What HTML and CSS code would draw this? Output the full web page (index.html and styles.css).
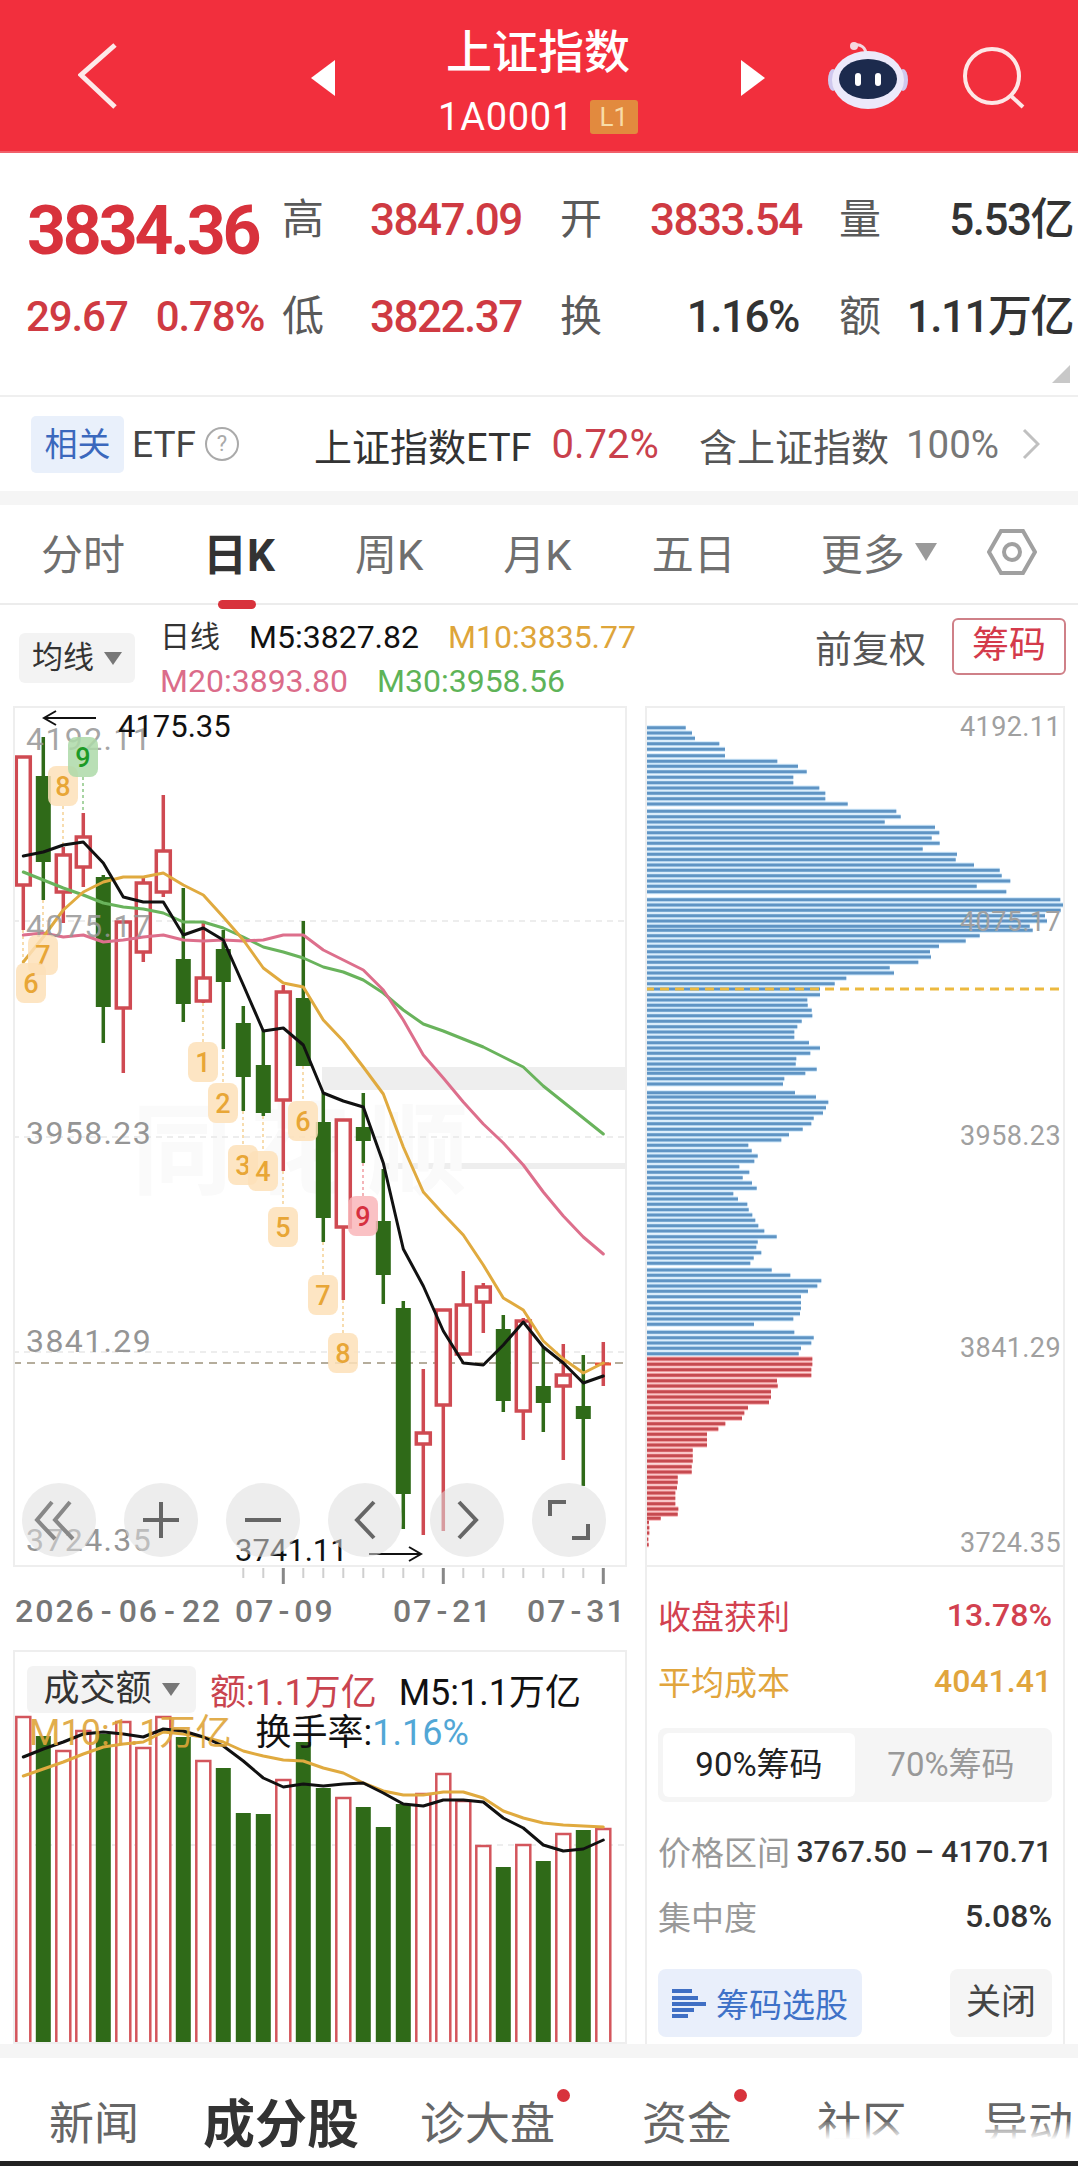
FILE: index.html
```html
<!DOCTYPE html>
<html lang="en">

<head>
    <meta charset="UTF-8">
    <meta name="viewport" content="width=device-width, initial-scale=1.0">
    <title>上证指数</title>
    <link rel="stylesheet" href="styles.css">
</head>

<body>
    <div class="page">
        <header class="topbar">
            <svg class="back" viewBox="0 0 40 68"><path d="M37 3L3 33L37 65"/></svg>
            <span class="switch switch-left"></span>
            <div class="title">
                <h1>上证指数</h1>
                <p>1A0001<span class="badge">L1</span></p>
            </div>
            <span class="switch switch-right"></span>
            <svg class="robot" viewBox="0 0 80 70">
                <path d="M38 14C38 6 32 3 27 4" fill="none" stroke="#f3d7df" stroke-width="3"/>
                <circle cx="26" cy="5" r="4" fill="#f6d9df"/>
                <ellipse cx="5" cy="39" rx="5" ry="11" fill="#cfc8ee"/>
                <ellipse cx="75" cy="39" rx="5" ry="11" fill="#cfc8ee"/>
                <ellipse cx="40" cy="39" rx="36" ry="29" fill="#ece9fa"/>
                <ellipse cx="40" cy="38" rx="29" ry="20" fill="#1c2a4d"/>
                <rect x="27" y="32" width="6" height="13" rx="3" fill="#fff"/>
                <rect x="47" y="32" width="6" height="13" rx="3" fill="#fff"/>
            </svg>
            <svg class="search" viewBox="0 0 62 62"><circle cx="29" cy="29" r="27"/><path d="M47 48L60 60"/></svg>
        </header>

        <section class="quote">
            <div class="price">3834.36</div>
            <div class="label">高</div>
            <div class="num up">3847.09</div>
            <div class="label">开</div>
            <div class="num up">3833.54</div>
            <div class="label">量</div>
            <div class="num end">5.53亿</div>

            <div class="change up"><span>29.67</span><span>0.78%</span></div>
            <div class="label">低</div>
            <div class="num up">3822.37</div>
            <div class="label">换</div>
            <div class="num num-right">1.16%</div>
            <div class="label">额</div>
            <div class="num end">1.11万亿</div>
            <span class="corner"></span>
        </section>

        <section class="etf">
            <span class="chip">相关</span>
            <span class="etf-name">ETF</span>
            <span class="help">?</span>
            <span class="etf-title">上证指数ETF</span>
            <span class="etf-pct">0.72%</span>
            <span class="etf-title etf-has">含上证指数</span>
            <span class="etf-gray">100%</span>
            <svg class="etf-arrow" viewBox="0 0 18 32"><path d="M2 2L16 16L2 30"/></svg>
        </section>

        <nav class="tabs">
            <a>分时</a>
            <a class="active">日K</a>
            <a>周K</a>
            <a>月K</a>
            <a>五日</a>
            <a class="more">更多<i class="tri"></i></a>
            <svg class="hex" viewBox="0 0 50 46"><path d="M14 2H36L48 23L36 44H14L2 23Z"/><circle cx="25" cy="23" r="8"/></svg>
        </nav>

        <div class="legend">
            <div class="select">均线<i class="tri tri-dark"></i></div>
            <div class="legend-lines">
                <div class="legend-line"><span class="ma-name">日线</span><span class="black">M5:3827.82</span><span class="orange">M10:3835.77</span></div>
                <div class="legend-line"><span class="pink">M20:3893.80</span><span class="green">M30:3958.56</span></div>
            </div>
            <div class="legend-right">
                <span class="adjust">前复权</span>
                <span class="chips-btn">筹码</span>
            </div>
        </div>

        <div class="charts">
            <div class="left">
                <div class="chart-box">
                    <svg class="kline" viewBox="13 706 614 861">
                        <!-- watermark -->
                        <rect x="322" y="1067" width="305" height="23" fill="#eeeeee"/>
                        <rect x="384" y="1163" width="243" height="6" fill="#eeeeee"/>
                        <text class="wm" x="132" y="1186">同花顺</text>

                        <!-- grid -->
                        <path class="grid" d="M13 921H627M13 1137H627M13 1352H627"/>
                        <path class="last" d="M13 1363H627"/>
                        <text class="axis" x="26" y="1144">3958.23</text>
                        <text class="axis" x="26" y="1352">3841.29</text>
                        <text class="axis" x="26" y="1551">3724.35</text>

                        <!-- nine count stems -->
                        <path class="stem" d="M203 1003V1042M223 1049V1083M243 1111V1145M263 1116V1150M283 1171V1207M303 1066V1101M323 1242V1275M343 1300V1333M63 806V847M43 900V935M23 930V963"/>
                        <path class="stem stem-red" d="M363 1163V1196"/>
                        <path class="stem stem-green" d="M83 777V813"/>

                        <!-- candles -->
                        <path class="wick-up" d="M23.3 757V930M63.3 847V923M83.3 813V887M123.3 922V1073M143.3 878V962M163.3 795V897M203.3 923V1003M283.3 985V1171M343.3 1120V1300M423.3 1369V1535M443.3 1310V1531M463.3 1271V1354M483.3 1283V1333M523.3 1318V1440M563.3 1344V1460M603.3 1342V1386"/>
                        <path class="wick-down" d="M43.3 737V900M103.3 875V1043M183.3 888V1022M223.3 930V1049M243.3 1006V1111M263.3 1030V1116M303.3 921V1066M323.3 1092V1242M363.3 1093V1163M383.3 1169V1304M403.3 1301V1529M503.3 1315V1412M543.3 1347V1432M583.3 1355V1486"/>
                        <g class="body-up">
                            <rect x="16.3" y="757" width="14" height="128"/>
                            <rect x="56.3" y="855" width="14" height="37"/>
                            <rect x="76.3" y="837" width="14" height="30"/>
                            <rect x="116.3" y="922" width="14" height="86"/>
                            <rect x="136.3" y="883" width="14" height="69"/>
                            <rect x="156.3" y="851" width="14" height="41"/>
                            <rect x="196.3" y="978" width="14" height="23"/>
                            <rect x="276.3" y="992" width="14" height="108"/>
                            <rect x="336.3" y="1120" width="14" height="107"/>
                            <rect x="416.3" y="1433" width="14" height="11"/>
                            <rect x="436.3" y="1310" width="14" height="95"/>
                            <rect x="456.3" y="1305" width="14" height="49"/>
                            <rect x="476.3" y="1287" width="14" height="15"/>
                            <rect x="516.3" y="1321" width="14" height="90"/>
                            <rect x="556.3" y="1375" width="14" height="11"/>
                        </g>
                        <g class="body-down">
                            <rect x="35.8" y="776" width="15" height="86"/>
                            <rect x="95.8" y="877" width="15" height="130"/>
                            <rect x="175.8" y="959" width="15" height="45"/>
                            <rect x="215.8" y="949" width="15" height="33"/>
                            <rect x="235.8" y="1023" width="15" height="54"/>
                            <rect x="255.8" y="1065" width="15" height="48"/>
                            <rect x="295.8" y="998" width="15" height="68"/>
                            <rect x="315.8" y="1122" width="15" height="96"/>
                            <rect x="355.8" y="1127" width="15" height="14"/>
                            <rect x="375.8" y="1221" width="15" height="54"/>
                            <rect x="395.8" y="1308" width="15" height="186"/>
                            <rect x="495.8" y="1329" width="15" height="72"/>
                            <rect x="535.8" y="1386" width="15" height="17"/>
                            <rect x="575.8" y="1406" width="15" height="13"/>
                        </g>
                        <path class="cross" d="M595 1364H611"/>

                        <!-- moving averages -->
                        <polyline class="ma ma30" points="23.3,872 43.3,880 63.3,888 83.3,895 103.3,903 123.3,907 143.3,909 163.3,913 183.3,922 203.3,922 223.3,928 243.3,937 263.3,947 283.3,952 303.3,958 323.3,967 343.3,972 363.3,980 383.3,993 403.3,1010 423.3,1024 443.3,1031 463.3,1039 483.3,1047 503.3,1057 523.3,1067 543.3,1086 563.3,1102 583.3,1118 603.3,1134"/>
                        <polyline class="ma ma20" points="23.3,935 43.3,933 63.3,937 83.3,935 103.3,942 123.3,940 143.3,937 163.3,935 183.3,940 203.3,941 223.3,940 243.3,941 263.3,940 283.3,935 303.3,935 323.3,950 343.3,960 363.3,970 383.3,990 403.3,1020 423.3,1055 443.3,1078 463.3,1102 483.3,1124 503.3,1143 523.3,1165 543.3,1192 563.3,1216 583.3,1237 603.3,1254"/>
                        <polyline class="ma ma10" points="23.3,962 43.3,937 63.3,910 83.3,892 103.3,882 123.3,877 143.3,877 163.3,873 183.3,885 203.3,895 223.3,917 243.3,940 263.3,968 283.3,983 303.3,987 323.3,1020 343.3,1041 363.3,1067 383.3,1094 403.3,1147 423.3,1192 443.3,1214 463.3,1235 483.3,1265 503.3,1298 523.3,1310 543.3,1341 563.3,1359 583.3,1373 603.3,1363"/>
                        <polyline class="ma ma5" points="23.3,856 43.3,852 63.3,845 83.3,842 103.3,863 123.3,897 143.3,902 163.3,902 183.3,935 203.3,928 223.3,940 243.3,985 263.3,1031 283.3,1028 303.3,1045 323.3,1093 343.3,1101 363.3,1107 383.3,1163 403.3,1249 423.3,1286 443.3,1331 463.3,1363 483.3,1365 503.3,1345 523.3,1322 543.3,1347 563.3,1363 583.3,1383 603.3,1376"/>

                        <!-- these two axis labels sit over the candles -->
                        <text class="axis axis-top" x="26" y="750">4192.11</text>
                        <text class="axis axis-top" x="26" y="937">4075.17</text>

                        <!-- nine count tags -->
                        <g class="tag">
                            <rect x="188" y="1042" width="30" height="40" rx="8"/><text x="203" y="1072">1</text>
                            <rect x="208" y="1083" width="30" height="40" rx="8"/><text x="223" y="1113">2</text>
                            <rect x="228" y="1145" width="30" height="40" rx="8"/><text x="243" y="1175">3</text>
                            <rect x="248" y="1151" width="30" height="40" rx="8"/><text x="263" y="1181">4</text>
                            <rect x="268" y="1207" width="30" height="40" rx="8"/><text x="283" y="1237">5</text>
                            <rect x="288" y="1101" width="30" height="40" rx="8"/><text x="303" y="1131">6</text>
                            <rect x="308" y="1275" width="30" height="40" rx="8"/><text x="323" y="1305">7</text>
                            <rect x="328" y="1333" width="30" height="40" rx="8"/><text x="343" y="1363">8</text>
                            <rect x="48" y="766" width="30" height="40" rx="8"/><text x="63" y="796">8</text>
                            <rect x="28" y="935" width="30" height="40" rx="8"/><text x="43" y="965">7</text>
                            <rect x="16" y="963" width="30" height="40" rx="8"/><text x="31" y="993">6</text>
                        </g>
                        <g class="tag tag-red">
                            <rect x="348" y="1196" width="30" height="40" rx="8"/><text x="363" y="1226">9</text>
                        </g>
                        <g class="tag tag-green">
                            <rect x="68" y="737" width="30" height="40" rx="8"/><text x="83" y="767">9</text>
                        </g>

                        <!-- high / low arrows -->
                        <path class="arrow" d="M96 718H44M56 711L44 718L56 725"/>
                        <text class="note" x="118" y="737">4175.35</text>
                        <text class="note" x="235" y="1561">3741.11</text>
                        <path class="arrow" d="M369 1554H421M409 1547L421 1554L409 1561"/>
                    </svg>
                    <div class="tools">
                        <button><svg viewBox="0 0 74 74"><path class="soft" d="M30 19L15 37L33 56M48 19L33 37L51 56"/></svg></button>
                        <button><svg viewBox="0 0 74 74"><path d="M19 37H55M37 19V55"/></svg></button>
                        <button><svg viewBox="0 0 74 74"><path d="M19 37H55"/></svg></button>
                        <button><svg viewBox="0 0 74 74"><path d="M46 19L29 37L46 55"/></svg></button>
                        <button><svg viewBox="0 0 74 74"><path d="M29 19L46 37L29 55"/></svg></button>
                        <button><svg viewBox="0 0 74 74"><path d="M18 33V19H34M56 41V55H40"/></svg></button>
                    </div>
                </div>

                <svg class="xaxis" viewBox="13 1567 614 83">
                    <path class="tick" d="M243.3 1568V1578M263.3 1568V1578M303.3 1568V1578M323.3 1568V1578M343.3 1568V1578M363.3 1568V1578M383.3 1568V1578M403.3 1568V1578M423.3 1568V1578M463.3 1568V1578M483.3 1568V1578M503.3 1568V1578M523.3 1568V1578M543.3 1568V1578M563.3 1568V1578M583.3 1568V1578"/>
                    <path class="tick-big" d="M283.3 1568V1584M443.3 1568V1584M603.3 1568V1584"/>
                    <text class="date" x="15" y="1622">2026<tspan dx="5">-</tspan><tspan dx="5">06</tspan><tspan dx="5">-</tspan><tspan dx="5">22</tspan></text>
                    <text class="date" x="235" y="1622">07<tspan dx="3">-</tspan><tspan dx="3">09</tspan></text>
                    <text class="date" x="393" y="1622">07<tspan dx="3">-</tspan><tspan dx="3">21</tspan></text>
                    <text class="date" x="527" y="1622">07<tspan dx="3">-</tspan><tspan dx="3">31</tspan></text>
                </svg>

                <div class="vol-box">
                    <svg class="vol" viewBox="13 1650 614 394">
                        <path class="grid" d="M13 1845H627"/>
                        <g class="vol-up">
                            <rect x="16.3" y="1717" width="14" height="327"/>
                            <rect x="56.3" y="1751" width="14" height="293"/>
                            <rect x="76.3" y="1731" width="14" height="313"/>
                            <rect x="116.3" y="1722" width="14" height="322"/>
                            <rect x="136.3" y="1748" width="14" height="296"/>
                            <rect x="156.3" y="1717" width="14" height="327"/>
                            <rect x="196.3" y="1761" width="14" height="283"/>
                            <rect x="276.3" y="1780" width="14" height="264"/>
                            <rect x="336.3" y="1798" width="14" height="246"/>
                            <rect x="416.3" y="1794" width="14" height="250"/>
                            <rect x="436.3" y="1774" width="14" height="270"/>
                            <rect x="456.3" y="1801" width="14" height="243"/>
                            <rect x="476.3" y="1846" width="14" height="198"/>
                            <rect x="516.3" y="1845" width="14" height="199"/>
                            <rect x="556.3" y="1834" width="14" height="210"/>
                            <rect x="596.3" y="1829" width="14" height="215"/>
                        </g>
                        <g class="vol-down">
                            <rect x="35.8" y="1736" width="15" height="308"/>
                            <rect x="95.8" y="1734" width="15" height="310"/>
                            <rect x="175.8" y="1737" width="15" height="307"/>
                            <rect x="215.8" y="1768" width="15" height="276"/>
                            <rect x="235.8" y="1813" width="15" height="231"/>
                            <rect x="255.8" y="1814" width="15" height="230"/>
                            <rect x="295.8" y="1742" width="15" height="302"/>
                            <rect x="315.8" y="1788" width="15" height="256"/>
                            <rect x="355.8" y="1807" width="15" height="237"/>
                            <rect x="375.8" y="1827" width="15" height="217"/>
                            <rect x="395.8" y="1804" width="15" height="240"/>
                            <rect x="495.8" y="1867" width="15" height="177"/>
                            <rect x="535.8" y="1861" width="15" height="183"/>
                            <rect x="575.8" y="1830" width="15" height="214"/>
                        </g>
                        <polyline class="ma vma10" points="23.3,1776 43.3,1769 63.3,1762 83.3,1754 103.3,1747 123.3,1744 143.3,1742 163.3,1732 183.3,1734 203.3,1737 223.3,1742 243.3,1751 263.3,1756 283.3,1760 303.3,1761 323.3,1768 343.3,1773 363.3,1783 383.3,1791 403.3,1795 423.3,1795 443.3,1792 463.3,1792 483.3,1798 503.3,1811 523.3,1818 543.3,1823 563.3,1825 583.3,1826 603.3,1827"/>
                        <polyline class="ma ma5" points="23.3,1757 43.3,1749 63.3,1742 83.3,1734 103.3,1732 123.3,1734 143.3,1737 163.3,1729 183.3,1731 203.3,1737 223.3,1746 243.3,1761 263.3,1778 283.3,1787 303.3,1784 323.3,1786 343.3,1784 363.3,1783 383.3,1793 403.3,1804 423.3,1806 443.3,1800 463.3,1800 483.3,1802 503.3,1818 523.3,1828 543.3,1845 563.3,1851 583.3,1849 603.3,1840"/>
                    </svg>
                    <div class="vol-legend">
                        <div class="vol-line">
                            <div class="select select-vol">成交额<i class="tri tri-dark"></i></div>
                            <span class="red">额:1.1万亿</span>
                            <span class="black">M5:1.1万亿</span>
                        </div>
                        <div class="vol-line vol-line2">
                            <span class="orange">M10:1.1万亿</span>
                            <span class="black">换手率:<em>1.16%</em></span>
                        </div>
                    </div>
                </div>
            </div>

            <div class="right">
                <div class="chip-box">
                    <svg class="bars" viewBox="645 706 420 861">
                        <defs>
                            <path id="blue" d="M645 727.7H685.7M645 733H692M645 738.3H695M645 743.7H719.3M645 749.3H725M645 755.7H725M645 761.3H777.3M645 766.3H798M645 771.7H806.7M645 777.3H793.3M645 782.7H793.3M645 788H819.3M645 793.3H825.3M645 798.7H825.3M645 804H847.7M645 811.3H896.3M645 816.7H900.7M645 822H884.7M645 827.3H935M645 832.7H939.3M645 838H931.7M645 843.3H939.7M645 849H922.7M645 854.3H957M645 859.7H955.7M645 865H974M645 870.3H999.7M645 875.7H1001.7M645 881H1010.3M645 886.3H976.7M645 891.7H1006.3M645 899.7H1060.3M645 905H1064M645 910.3H1060.7M645 915.7H1045M645 921H1047M645 926.3H1029.7M645 930.3H1032.7M645 935.7H979.7M645 941H965.7M645 946.3H939M645 951.7H930M645 957H931M645 962.3H918.3M645 967.7H889.7M645 973H894M645 978.3H846.3M645 983.7H834.7M645 989H820M645 994.7H820M645 1000H807.3M645 1005.3H807.7M645 1010.3H811.7M645 1015.7H812.3M645 1021.3H801.7M645 1026.7H797.3M645 1032H794.3M645 1037.3H794.3M645 1042.7H809M645 1048H820M645 1053.3H810.3M645 1058.7H796.3M645 1064H795.7M645 1069.3H816.7M645 1073.3H805.3M645 1078.7H784.3M645 1084H783M645 1092.7H795M645 1097H816M645 1102.3H828.3M645 1107.7H826M645 1113H823M645 1118.3H813.7M645 1123.7H811.3M645 1129.3H802.7M645 1134.7H789M645 1140H781.3M645 1145.3H748.3M645 1150.7H751.7M645 1156H757.7M645 1161.3H754.3M645 1166.7H739.3M645 1172.3H749.3M645 1177.7H742.7M645 1183H752M645 1188.3H756.7M645 1193.7H733.3M645 1199H738M645 1204.3H747.3M645 1209.7H748.7M645 1215H752.3M645 1220.3H755.3M645 1225.7H758.3M645 1231H764.3M645 1236.7H776.7M645 1242H757.7M645 1247.3H756.3M645 1252.7H761.3M645 1258H753.7M645 1263.3H750.3M645 1270H771.7M645 1275.3H790.3M645 1280.7H821.3M645 1286H817.3M645 1291.3H808M645 1296.7H801M645 1302.7H801M645 1308.3H801M645 1313.7H800M645 1319H793.3M645 1324.3H754M645 1332.3H794.3M645 1337.7H813.7M645 1343H811.3M645 1348.3H801M645 1353.7H798.7"/>
                            <path id="red" d="M645 1359H812.3M645 1364.3H812.3M645 1369.7H811.3M645 1375.3H811.3M645 1380.7H777M645 1386H777.7M645 1391.7H771M645 1397H771M645 1402.3H769M645 1407.7H748M645 1413H744.3M645 1418.3H742M645 1423.7H725.3M645 1429H718.3M645 1434.3H707M645 1439.7H707M645 1445H707M645 1450.3H692.7M645 1455.7H692.7M645 1461H692.7M645 1466.7H691.7M645 1472H691.7M645 1477.3H677.7M645 1482.3H677.7M645 1487.7H677M645 1493H675.3M645 1498.3H675.3M645 1503.7H675.3M645 1509H678.3M645 1514.3H677.7M645 1518.3H660.7M645 1522.3H649M645 1527.7H649.3M645 1533H649.3M645 1539.3H648.3M645 1544.7H648.7"/>
                        </defs>
                        <use href="#blue" class="halo-blue"/>
                        <use href="#blue" class="bar-blue"/>
                        <use href="#red" class="halo-red"/>
                        <use href="#red" class="bar-red"/>
                        <path class="avg" d="M645 989H1060"/>
                        <text class="axis axis-r" x="960" y="736">4192.11</text>
                        <text class="axis axis-r" x="960" y="931">4075.17</text>
                        <text class="axis axis-r" x="960" y="1145">3958.23</text>
                        <text class="axis axis-r" x="960" y="1357">3841.29</text>
                        <text class="axis axis-r" x="960" y="1552">3724.35</text>
                    </svg>
                </div>
                <div class="stats">
                    <div class="row row-profit"><span>收盘获利</span><b>13.78%</b></div>
                    <div class="row row-cost"><span>平均成本</span><b>4041.41</b></div>
                    <div class="segment">
                        <span class="seg-on">90%筹码</span>
                        <span>70%筹码</span>
                    </div>
                    <div class="row row-range"><span>价格区间</span><b>3767.50 – 4170.71</b></div>
                    <div class="row row-conc"><span>集中度</span><b>5.08%</b></div>
                    <div class="actions">
                        <a class="pick">
                            <svg viewBox="0 0 34 30"><path d="M0 3H20M0 10H26M0 16H34M0 22H22M0 28H16"/></svg>
                            筹码选股
                        </a>
                        <a class="close">关闭</a>
                    </div>
                </div>
            </div>
        </div>

        <div class="band"></div>

        <nav class="bottom">
            <a>新闻</a>
            <a class="bottom-on">成分股</a>
            <a class="dot">诊大盘</a>
            <a class="dot">资金</a>
            <a>社区</a>
            <a>异动</a>
            <span class="fade"></span>
        </nav>
        <div class="home-bar"></div>
    </div>
</body>

</html>
```
FILE: styles.css
```css
body {
    margin: 0;
    padding: 0;
    background-color: #fff;
    font-family: 'Roboto', 'Noto Sans CJK SC', sans-serif;
    color: #333;
}

.page {
    position: relative;
    width: 1078px;
    height: 2166px;
    overflow: hidden;
    background-color: #fff;
}

svg {
    display: block;
}

/* header */
.topbar {
    height: 153px;
    background-color: #f22f3d;
    display: flex;
    align-items: flex-start;
    box-sizing: border-box;
    border-bottom: 2px solid #f0606a;
    color: #fff;
}

.back {
    width: 40px;
    height: 68px;
    margin: 42px 0 0 78px;
    fill: none;
    stroke: #fde9e9;
    stroke-width: 5;
}

.switch {
    width: 0;
    height: 0;
    margin-top: 60px;
    border-top: 18px solid transparent;
    border-bottom: 18px solid transparent;
}

.switch-left {
    margin-left: 193px;
    border-right: 24px solid #fff;
}

.switch-right {
    border-left: 24px solid #fff;
}

.title {
    width: 406px;
    text-align: center;
}

.title h1 {
    margin: 24px 0 0;
    font-size: 46px;
    line-height: 56px;
    font-weight: 500;
}

.title p {
    margin: 15px 0 0;
    font-size: 38px;
    line-height: 44px;
    letter-spacing: 0.7px;
    display: flex;
    justify-content: center;
    align-items: center;
    gap: 16px;
}

.badge {
    width: 48px;
    height: 34px;
    background-color: #e28a3e;
    border-radius: 3px;
    color: #f8dca8;
    font-size: 26px;
    line-height: 34px;
    letter-spacing: 0;
}

.robot {
    width: 80px;
    height: 70px;
    margin: 41px 0 0 63px;
}

.search {
    width: 62px;
    height: 62px;
    margin: 47px 0 0 55px;
    fill: none;
    stroke: #fde7e6;
    stroke-width: 4;
}

/* quote */
.quote {
    position: relative;
    height: 244px;
    box-sizing: border-box;
    padding: 36px 5px 0 27px;
    display: grid;
    grid-template-columns: 255px 88px 190px 90px 189px 66px 168px;
    grid-auto-rows: 62px;
    row-gap: 35px;
    align-items: center;
    border-bottom: 2px solid #efefef;
}

.price {
    font-size: 68px;
    line-height: 68px;
    font-weight: 700;
    letter-spacing: -3.2px;
    color: #d8323c;
    margin-top: 22px;
}

.label {
    font-size: 42px;
    line-height: 62px;
    color: #5a5a5a;
}

.num {
    font-size: 44px;
    font-weight: 500;
    line-height: 62px;
    letter-spacing: -1.5px;
    white-space: nowrap;
}

.up {
    color: #cf3a42;
}

.num-right {
    text-align: right;
    padding-right: 40px;
}

.num.end {
    text-align: right;
}

.change {
    display: flex;
    gap: 28px;
    margin-left: -1px;
    font-size: 42px;
    font-weight: 500;
    line-height: 62px;
    letter-spacing: -1.1px;
    white-space: nowrap;
}

.corner {
    position: absolute;
    right: 8px;
    bottom: 12px;
    width: 0;
    height: 0;
    border-left: 18px solid transparent;
    border-bottom: 18px solid #c8c8c8;
}

/* etf row */
.etf {
    height: 94px;
    display: flex;
    align-items: center;
    font-size: 37px;
    white-space: nowrap;
}

.chip {
    width: 93px;
    height: 57px;
    margin-left: 31px;
    background-color: #e9f0fb;
    border-radius: 5px;
    color: #3b68bd;
    font-size: 33px;
    line-height: 57px;
    text-align: center;
}

.etf-name {
    margin-left: 8px;
    color: #444;
}

.help {
    width: 30px;
    height: 30px;
    margin-left: 9px;
    border: 2px solid #aaa;
    border-radius: 50%;
    color: #aaa;
    font-size: 22px;
    line-height: 30px;
    text-align: center;
}

.etf-title {
    margin-left: 75px;
    color: #333;
    font-size: 38px;
}

.etf-pct {
    margin-left: 20px;
    color: #c9404c;
    font-size: 40px;
}

.etf-has {
    margin-left: 40px;
    color: #555;
}

.etf-gray {
    margin-left: 17px;
    color: #777;
    font-size: 38.5px;
}

.etf-arrow {
    width: 18px;
    height: 32px;
    margin-left: 23px;
    fill: none;
    stroke: #c0c0c0;
    stroke-width: 3;
}

/* period tabs */
.tabs {
    height: 114px;
    box-sizing: border-box;
    border-top: 14px solid #f5f5f5;
    border-bottom: 2px solid #ececec;
    padding: 0 0 5px 41px;
    display: flex;
    align-items: center;
    gap: 80px;
    font-size: 42px;
    color: #6f6f6f;
}

.tabs a {
    position: relative;
    white-space: nowrap;
}

.tabs .active {
    margin-left: -2px;
    color: #333;
    font-size: 44px;
    font-weight: 700;
}

.tabs .active::after {
    content: "";
    position: absolute;
    left: 15px;
    bottom: -25px;
    width: 38px;
    height: 9px;
    border-radius: 5px;
    background-color: #d8323c;
}

.more {
    display: flex;
    align-items: center;
    gap: 10px;
    margin-left: 5px;
}

.tri {
    width: 0;
    height: 0;
    border-left: 11px solid transparent;
    border-right: 11px solid transparent;
    border-top: 18px solid #9a9a9a;
}

.tri-dark {
    border-left-width: 9px;
    border-right-width: 9px;
    border-top-width: 13px;
    border-top-color: #777;
}

.hex {
    width: 50px;
    height: 46px;
    margin-left: -30px;
    fill: none;
    stroke: #a0a0a0;
    stroke-width: 4;
}

/* legend */
.legend {
    height: 101px;
    box-sizing: border-box;
    padding: 10px 12px 0 19px;
    display: flex;
}

.select {
    width: 116px;
    height: 50px;
    margin-top: 18px;
    border-radius: 6px;
    background-color: #f3f3f3;
    font-size: 31px;
    line-height: 50px;
    display: flex;
    align-items: center;
    justify-content: center;
    gap: 10px;
}

.legend-lines {
    margin-left: 25px;
    font-size: 32px;
    line-height: 44px;
}

.legend-line {
    display: flex;
    gap: 29px;
    white-space: nowrap;
}

.ma-name {
    font-size: 30px;
}

.black {
    color: #111;
}

.orange {
    color: #dea53a;
}

.pink {
    color: #db6c8a;
}

.green {
    color: #5eb358;
}

.red {
    color: #c9444f;
}

.legend-right {
    margin: 3px 0 0 auto;
    display: flex;
    align-items: center;
    gap: 26px;
    height: 57px;
}

.adjust {
    font-size: 37px;
    color: #555;
    white-space: nowrap;
}

.chips-btn {
    width: 114px;
    height: 57px;
    box-sizing: border-box;
    border: 2px solid #cf8088;
    border-radius: 6px;
    color: #d43a4b;
    font-size: 37px;
    line-height: 52px;
    text-align: center;
}

/* chart columns */
.charts {
    padding-left: 13px;
    display: flex;
    gap: 18px;
}

.left {
    width: 614px;
}

.chart-box {
    position: relative;
    height: 861px;
    box-sizing: border-box;
    outline: 2px solid #eeeeee;
    outline-offset: -2px;
}

.kline {
    width: 614px;
    height: 861px;
}

.wm {
    font-size: 100px;
    font-weight: 700;
    fill: #fafafa;
    letter-spacing: 18px;
}

.grid {
    fill: none;
    stroke: #e8e8e8;
    stroke-width: 1.5;
    stroke-dasharray: 6 5;
}

.last {
    fill: none;
    stroke: #b5ad9c;
    stroke-width: 2;
    stroke-dasharray: 8 6;
}

.axis {
    font-size: 32px;
    fill: #959595;
    letter-spacing: 1.4px;
}

.axis-top {
    fill-opacity: 0.85;
}

.axis-r {
    font-size: 27px;
    fill: #a0a0a0;
    letter-spacing: 0.4px;
}

.stem {
    fill: none;
    stroke: #f7dcae;
    stroke-width: 2;
    stroke-dasharray: 3 3;
}

.stem-red {
    stroke: #f4b4b8;
}

.stem-green {
    stroke: #a8d4a2;
}

.wick-up {
    fill: none;
    stroke: #cf4a52;
    stroke-width: 3.5;
}

.wick-down {
    fill: none;
    stroke: #2f6a18;
    stroke-width: 3.5;
}

.body-up rect {
    fill: #fff;
    stroke: #cf4a52;
    stroke-width: 3.5;
}

.body-down rect {
    fill: #2f6a18;
}

.cross {
    fill: none;
    stroke: #e8553c;
    stroke-width: 3;
}

.ma {
    fill: none;
    stroke-width: 3;
    stroke-linejoin: round;
    stroke-linecap: round;
}

.ma5 {
    stroke: #111;
}

.ma10 {
    stroke: #e0aa3f;
}

.ma20 {
    stroke: #dd6f8c;
}

.ma30 {
    stroke: #69b35c;
}

.tag rect {
    fill: #fde0b8;
    fill-opacity: 0.85;
}

.tag text {
    font-size: 27px;
    font-weight: 500;
    fill: #e8a636;
    text-anchor: middle;
}

.tag-red rect {
    fill: #f9b6ba;
}

.tag-red text {
    fill: #d6303f;
}

.tag-green rect {
    fill: #add9a8;
}

.tag-green text {
    fill: #1d9a26;
}

.arrow {
    fill: none;
    stroke: #111;
    stroke-width: 2;
}

.note {
    font-size: 31px;
    fill: #111;
}

/* buttons over the chart */
.tools {
    position: absolute;
    left: 9px;
    top: 777px;
    display: flex;
    gap: 28px;
}

.tools button {
    width: 74px;
    height: 74px;
    padding: 0;
    border: 0;
    border-radius: 50%;
    background-color: rgba(222, 222, 222, 0.55);
}

.tools svg {
    width: 74px;
    height: 74px;
    fill: none;
    stroke: #666;
    stroke-width: 4;
}

.tools .soft {
    stroke: #888;
}

/* x axis */
.xaxis {
    width: 614px;
    height: 83px;
}

.tick {
    fill: none;
    stroke: #cfcfcf;
    stroke-width: 2;
}

.tick-big {
    fill: none;
    stroke: #888;
    stroke-width: 3;
}

.date {
    font-size: 32px;
    fill: #777;
    letter-spacing: 2px;
    font-weight: 500;
}

/* volume */
.vol-box {
    position: relative;
    height: 394px;
    box-sizing: border-box;
    outline: 2px solid #eeeeee;
    outline-offset: -2px;
}

.vol {
    width: 614px;
    height: 394px;
}

.vol-up rect {
    fill: #fff;
    stroke: #d3555c;
    stroke-width: 2.5;
}

.vol-down rect {
    fill: #2f6a18;
}

.vma10 {
    stroke: #e0aa3f;
    stroke-width: 3;
}

.vol-legend {
    position: absolute;
    left: 14px;
    top: 13px;
    font-size: 36px;
    white-space: nowrap;
}

.vol-line {
    display: flex;
    align-items: center;
    gap: 22px;
}

.vol-line2 {
    margin: -3px 0 0 2px;
    gap: 24px;
    line-height: 42px;
}

.vol-line .orange {
    opacity: 0.9;
}

.select-vol {
    width: 169px;
    height: 47px;
    margin: 0 -8px 0 0;
    font-size: 36px;
}

.vol-line em {
    font-style: normal;
    color: #52a7d6;
}

/* chips panel */
.right {
    width: 420px;
}

.chip-box {
    height: 861px;
    box-sizing: border-box;
    outline: 2px solid #eeeeee;
    outline-offset: -2px;
}

.bars {
    width: 420px;
    height: 861px;
}

.halo-blue {
    fill: none;
    stroke: #cfe8fa;
    stroke-width: 5;
}

.bar-blue {
    fill: none;
    stroke: #5f94c4;
    stroke-width: 3;
}

.halo-red {
    fill: none;
    stroke: #f8b3b5;
    stroke-width: 5;
}

.bar-red {
    fill: none;
    stroke: #c64a50;
    stroke-width: 3;
}

.avg {
    fill: none;
    stroke: #ecb93f;
    stroke-width: 3;
    stroke-dasharray: 9 6;
}

.stats {
    height: 477px;
    box-sizing: border-box;
    border-left: 2px solid #eeeeee;
    border-right: 2px solid #eeeeee;
    padding: 25px 11px 0 11px;
}

.row {
    height: 46px;
    display: flex;
    align-items: center;
    justify-content: space-between;
    font-size: 33px;
    white-space: nowrap;
}

.row b {
    font-weight: 500;
    font-size: 32px;
}

.row-profit {
    color: #d2414f;
}

.row-cost {
    margin-top: 20px;
    color: #e1a53c;
}

.row-range {
    margin-top: 26px;
    color: #333;
}

.row-range b {
    font-size: 30px;
}

.row-conc {
    margin-top: 19px;
    color: #333;
}

.row-range span,
.row-conc span {
    color: #999;
}

.segment {
    margin-top: 24px;
    height: 74px;
    box-sizing: border-box;
    padding: 5px;
    background-color: #f5f5f5;
    border-radius: 8px;
    display: flex;
    font-size: 33px;
    color: #999;
}

.segment span {
    flex: 1;
    line-height: 64px;
    text-align: center;
}

.segment .seg-on {
    background-color: #fff;
    border-radius: 6px;
    color: #222;
}

.actions {
    margin-top: 30px;
    display: flex;
    justify-content: space-between;
}

.pick {
    width: 204px;
    height: 68px;
    background-color: #e9effb;
    border-radius: 8px;
    display: flex;
    align-items: center;
    justify-content: center;
    gap: 10px;
    color: #3f72c8;
    font-size: 33px;
}

.pick svg {
    width: 34px;
    height: 30px;
    fill: none;
    stroke: #3f6fc4;
    stroke-width: 4;
}

.close {
    width: 102px;
    height: 68px;
    background-color: #f5f5f5;
    border-radius: 8px;
    color: #444;
    font-size: 35px;
    line-height: 68px;
    text-align: center;
}

/* bottom tabs */
.band {
    height: 14px;
    background-color: #f5f5f5;
}

.bottom {
    position: relative;
    height: 103px;
    box-sizing: border-box;
    padding: 21px 0 0 49px;
    display: flex;
    align-items: center;
    font-size: 45px;
    color: #666;
    white-space: nowrap;
}

.bottom a {
    position: relative;
    margin-right: 64px;
}

.bottom a:nth-child(2) {
    margin-right: 61px;
}

.bottom a:nth-child(3) {
    margin-right: 87px;
}

.bottom a:nth-child(4) {
    margin-right: 85px;
}

.bottom a:nth-child(5) {
    margin-right: 76px;
}

.bottom-on {
    color: #333;
    font-size: 52px;
    font-weight: 700;
}

.dot::after {
    content: "";
    position: absolute;
    right: -15px;
    top: 1px;
    width: 13px;
    height: 13px;
    border-radius: 50%;
    background-color: #d8323c;
}

.fade {
    position: absolute;
    left: 790px;
    right: 0;
    top: 64px;
    bottom: 0;
    background: linear-gradient(rgba(255, 255, 255, 0.1), #fff 45%);
}

.home-bar {
    height: 5px;
    background-color: #222;
}
```
